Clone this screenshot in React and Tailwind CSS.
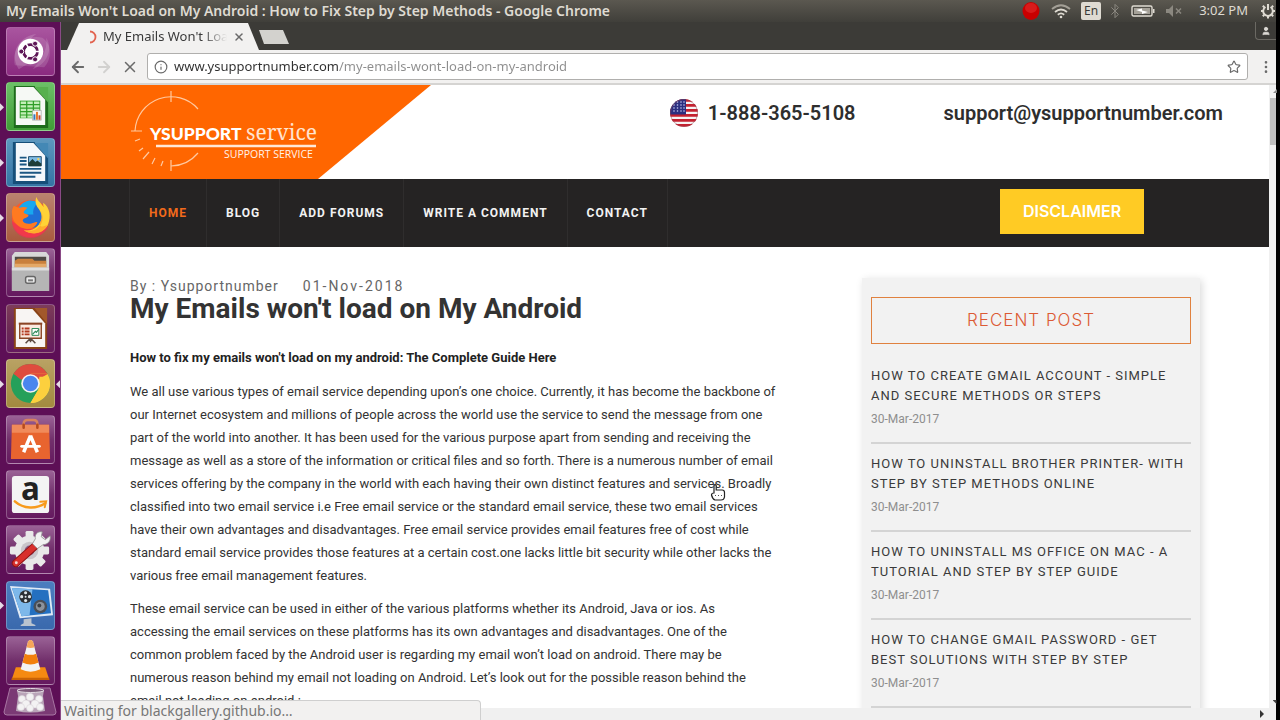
import React from "react";
import { ArrowLeft, ArrowRight, X, Star, Info, User, Bluetooth, EllipsisVertical } from "lucide-react";

const ui = "font-['Noto_Sans','Open_Sans',sans-serif]";

function Tile({ label, className, running, focused, children }) {
  return (
    <li className="relative flex w-full justify-center">
      {running && (
        <span className="absolute top-[21px] left-0 h-2 w-1 bg-[#e6dbe6] [clip-path:polygon(0_0,100%_50%,0_100%)]" />
      )}
      <button
        type="button"
        aria-label={label}
        className={`h-[49px] w-[49px] rounded-[4px] border border-white/25 ${className}`}
      >
        <svg viewBox="0 0 48 48" className="h-full w-full overflow-visible" aria-hidden="true">
          {children}
        </svg>
      </button>
      {focused && (
        <span className="absolute top-[21px] right-0 h-2 w-1 bg-[#e6dbe6] [clip-path:polygon(100%_0,0_50%,100%_100%)]" />
      )}
    </li>
  );
}

const glass = "bg-linear-to-b from-[#9a6296] via-[#72306c] to-[#65195f]";

function Launcher() {
  return (
    <nav
      aria-label="Launcher"
      className="flex w-[61px] shrink-0 flex-col gap-0.5 border-r border-[#8a4a86] bg-[#5d0f56] pt-[5px] pb-1"
    >
      <ul className="flex flex-1 flex-col justify-between">
        <Tile label="Search your computer" className="bg-linear-to-b from-[#a9559f] to-[#8b2a80]">
          <path d="M8 38C4 20 18 6 36 10c10 6 10 22 2 30" fill="#fff" opacity=".14" />
          <path d="M12 42C2 26 12 8 30 6C20 12 16 24 22 36Z" fill="#fff" opacity=".16" />
          <path d="M40 10c8 12 0 28-14 32c8-8 16-18 14-32Z" fill="#fff" opacity=".14" />
          <circle cx="24" cy="24" r="13" fill="#fff" />
          <circle cx="24" cy="24" r="7" fill="none" stroke="#5d1656" strokeWidth="3" />
          <g stroke="#fff" strokeWidth="1.6">
            <path d="M24 24L34 24M24 24L19 33M24 24L19 15" />
          </g>
          <circle cx="24" cy="24" r="5.4" fill="#fff" />
          <g fill="#5d1656" stroke="#fff" strokeWidth="1">
            <circle cx="14.6" cy="24" r="2.6" />
            <circle cx="28.7" cy="16" r="2.6" />
            <circle cx="28.7" cy="32" r="2.6" />
          </g>
        </Tile>
        <Tile label="LibreOffice Calc" running className="bg-linear-to-b from-[#6cc067] to-[#3f9d35]">
          <path d="M7 3h21l14 15v28H7z" fill="#1d6b1b" />
          <path d="M28 4h14v16z" fill="#58b04e" />
          <path d="M9 4h18l12 13v26H9z" fill="#f6f9f5" />
          <path d="M27 4v0l12 13z" fill="#c9e6c3" />
          <path d="M13 18h21v18H13z" fill="#2f9e27" />
          <g fill="#c4efb8">
            {[19, 22.6, 26.2, 29.8, 33.2].map((y) => (
              <path key={y} d={`M14 ${y}h5.5v2.4h-5.5zM20.8 ${y}h5.5v2.4h-5.5zM27.6 ${y}h5.5v2.4h-5.5z`} />
            ))}
          </g>
          <path d="M26 28h9v10h-9z" fill="#f4f4f4" stroke="#9a9a9a" strokeWidth=".6" />
          <path d="M27 32h2v5.500h-2z" fill="#3179bd" />
          <path d="M29.600 29.500h2v8h-2z" fill="#e7762b" />
          <path d="M32.200 33h2v4.500h-2z" fill="#c94a2c" />
        </Tile>
        <Tile label="LibreOffice Writer" running className="bg-linear-to-b from-[#5c97be] to-[#3474a4]">
          <path d="M6 3h22l14 15v28H6z" fill="#164f79" />
          <path d="M28 4h14v16z" fill="#4388b5" />
          <path d="M9 4h18l12 13v26H9z" fill="#f4f8fb" />
          <path d="M27 4v0l12 13z" fill="#bcd9ec" />
          <path d="M13 18h7v2h-7zM13 21.500h7v2h-7zM13 25h7v2h-7zM13 29.500h22v2H13zM13 33.500h22v2H13zM13 37.500h16v2H13z" fill="#1b5783" />
          <path d="M22 18h13v9.500H22z" fill="#7fbbe4" stroke="#23506f" strokeWidth="1" />
          <path d="M22 27.500v-3l4-4 3 3 2-1.500 4 3v2.500z" fill="#1e3d38" />
          <circle cx="32" cy="20.500" r="1.200" fill="#f4d35e" />
        </Tile>
        <Tile label="Firefox" running className="bg-linear-to-b from-[#b9836f] to-[#a95a3e]">
          <circle cx="24" cy="25" r="19" fill="#fb5a2a" />
          <path d="M5 27c0 10 8 18 19 18 9 0 16-6 18-12-7 5-22 5-28-2-4 0-7-1-9-4Z" fill="#ee2f55" opacity=".75" />
          <circle cx="25" cy="22" r="12.500" fill="#1f6fd6" />
          <path d="M12 14C17 6 26 5 31 9c-3 4-5 7-4 12H18c-3-2-5-4-6-7Z" fill="#18a8ee" />
          <path d="M7 12c2 1 4 2 6 2 3-1 5-1 8 0-2 2-4 3-4 5 1 2 4 1 5 3-1 3-5 2-6 5 1 3 5 4 9 3 2 0 4-2 6-1-2 5-8 8-14 6-8-2-12-9-12-17 0-2 1-4 2-6Z" fill="#ff7a20" />
          <path d="M30 3c-2 6 0 9 3 13 4 6 3 12-2 17-4 4-9 5-14 4 10 6 21 3 25-6 3-8 2-17-5-22 0 2 0 3 .5 4.500-2-4-6-6-7.500-10.500Z" fill="#ffd336" />
          <path d="M34 17c4 6 3 13-3 18-4 3-9 3-14 2 9 6 20 4 25-6-4 3-9 3-9-1 3-4 3-8 1-13Z" fill="#ffa62a" opacity=".85" />
        </Tile>
        <Tile label="Files" className={glass}>
          <path d="M5 7l3-4h32l3 4v36H5z" fill="#d8d8d8" />
          <path d="M8 8h32v14H8z" fill="#4f4a45" />
          <path d="M8 12l3-2h15l2 2h12v10H8z" fill="#c9803d" />
          <path d="M8 15h32v7H8z" fill="#e4a867" />
          <path d="M5 19h38v24H5z" fill="#b5b5b5" />
          <path d="M5 19h38v3H5z" fill="#dedede" />
          <rect x="19" y="28" width="10" height="7" rx="2" fill="#e9e9e9" stroke="#666" strokeWidth="1.500" />
          <path d="M21.500 31h5v2h-5z" fill="#777" />
        </Tile>
        <Tile label="LibreOffice Impress" className="bg-linear-to-b from-[#7d3c5a] via-[#6d2a55] to-[#65195f]">
          <path d="M7 3h22l12 13v29H7z" fill="#8a4316" />
          <path d="M28 3h13v16z" fill="#a2582b" />
          <path d="M9 4h17l13 15v24H9z" fill="#f8f5f3" />
          <path d="M13 19h22v15H13z" fill="#fbe9df" stroke="#8a4424" strokeWidth="1.400" />
          <path d="M12 18h24v2H12z" fill="#8a4424" />
          <path d="M15 23h2v2h-2zM15 26h2v2h-2zM15 29h2v2h-2zM18 23h5v2h-5zM18 26h5v2h-5zM18 29h5v2h-5z" fill="#b33a20" />
          <path d="M25.500 24h7v7h-7z" fill="#fff" stroke="#2f8a58" strokeWidth="1" />
          <path d="M26 30l3-3 1 1 2.500-3" fill="none" stroke="#2f8a58" strokeWidth="1.200" />
          <path d="M24 34l-5 5M24 34l5 5M24 34v4" stroke="#5c4a42" strokeWidth="1.600" />
        </Tile>
        <Tile label="Google Chrome" running focused className="bg-linear-to-b from-[#b9a263] to-[#a28a3f]">
          <circle cx="24" cy="24" r="20" fill="#25a05a" />
          <path d="M24 24L6.700 14A20 20 0 0 1 41.300 14Z" fill="#df4c3e" />
          <path d="M24 14H41.300A20 20 0 0 1 24 44L32.700 29Z" fill="#fcd03e" />
          <path d="M24 14H42L32 20L14 20L6.700 14Z" fill="#df4c3e" />
          <path d="M33 17h9.700A20 20 0 0 1 24 44l8-14Z" fill="#fcd03e" />
          <circle cx="24" cy="24" r="9.500" fill="#f3f3f3" />
          <circle cx="24" cy="24" r="7.800" fill="#4a86ee" />
        </Tile>
        <Tile label="Ubuntu Software" className={glass}>
          <path d="M17 12V8c0-3 2-4 4-4h6c2 0 4 1 4 4v4" fill="none" stroke="#d9825e" strokeWidth="2.600" />
          <path d="M5 9h38l1 35H4z" fill="#e8642f" />
          <path d="M5 9h38v8H5z" fill="#f08a5a" />
          <path d="M17 12V9M31 12V9" stroke="#b64a1e" strokeWidth="2.600" strokeLinecap="round" />
          <path d="M24 20l-7 17M24 20l7 17" stroke="#fff" strokeWidth="3.600" />
          <path d="M15 31h18" stroke="#fff" strokeWidth="3" strokeLinecap="round" />
        </Tile>
        <Tile label="Amazon" className={glass}>
          <rect x="5" y="5" width="38" height="38" rx="3" fill="#f4f4f4" />
          <text x="24" y="30" textAnchor="middle" fontSize="32" fontWeight="700" fill="#222" className="font-['Open_Sans',sans-serif]">a</text>
          <path d="M8 31c9 8 22 8 31 2" fill="none" stroke="#f79a1c" strokeWidth="2.600" strokeLinecap="round" />
          <path d="M34 31.500l6-.5-1.500 6" fill="none" stroke="#f79a1c" strokeWidth="2" strokeLinecap="round" />
        </Tile>
        <Tile label="System Settings" className={glass}>
          <g fill="#e9e9e9">
            <circle cx="23" cy="25" r="15" />
            {[0, 45, 90, 135].map((a) => (
              <rect key={a} x="19" y="5" width="8" height="40" rx="1.500" transform={`rotate(${a} 23 25)`} />
            ))}
          </g>
          <circle cx="23" cy="25" r="9" fill="#c9c5c9" />
          <circle cx="23" cy="25" r="5" fill="#8b5f88" />
          <path d="M9 38L28 21" stroke="#8f1313" strokeWidth="8" strokeLinecap="round" />
          <path d="M9 38L28 21" stroke="#d8302c" strokeWidth="6" strokeLinecap="round" />
          <path d="M26 18l5 5 6-4c5 0 8-4 7-9l-5 4-4-3 1-5c-5-1-8 3-7 7Z" fill="#f2f2f2" stroke="#8f8f8f" strokeWidth=".8" />
          <circle cx="9.500" cy="37.500" r="1.500" fill="#f6d6d6" />
        </Tile>
        <Tile label="Screen recorder" running className="bg-linear-to-b from-[#4c7ebf] to-[#3a69ad]">
          <path d="M3 4l41 3 3 27-34 3z" fill="#dfeaf6" />
          <path d="M5 6l37 2.500 3 23.500-30 3z" fill="#2470c0" />
          <path d="M5 6l21 1.500-3 26.500-8 1z" fill="#7db8ea" />
          <circle cx="19" cy="15" r="6.500" fill="#2b2f33" />
          <g fill="#dfe6ea">
            <circle cx="19" cy="11" r="1.600" />
            <circle cx="19" cy="19" r="1.600" />
            <circle cx="15" cy="15" r="1.600" />
            <circle cx="23" cy="15" r="1.600" />
            <circle cx="19" cy="15" r="1" />
          </g>
          <circle cx="34" cy="25" r="7" fill="#4a4f57" />
          <circle cx="34" cy="25" r="4.500" fill="#8c939c" />
          <circle cx="33" cy="24" r="2" fill="#3a3f46" />
          <path d="M17 38l8-1v5l4 2v1H14v-1l3-2z" fill="#b9c3cf" />
        </Tile>
        <Tile label="VLC media player" className={glass}>
          <path d="M9 31h30l4 12H5z" fill="#f58a12" />
          <path d="M5 41.500h38l.5 2.500h-39z" fill="#c96306" />
          <path d="M21.500 4.500q2.500-3 5 0L34 33q-10 5-20 0z" fill="#f3f3f3" />
          <path d="M21.500 4.500q2.500-3 5 0l1.700 6q-4.200 1.500-8.400 0z" fill="#f6a55a" />
          <path d="M18.200 17q5.800 2.500 11.600 0l2.400 9q-8.200 4-16.400 0z" fill="#f2800d" />
        </Tile>
      </ul>
      <button type="button" aria-label="Trash" className="flex h-[29px] justify-center">
        <svg viewBox="0 0 56 29" className="h-[29px] w-[56px]" aria-hidden="true">
          <path d="M8 1h40l6 24q0 3-3 3H5q-3 0-3-3z" fill="#7b3a75" stroke="#a876a3" strokeWidth="1" />
          <path d="M15 3h27l-1 6 2 15q-15 3-29 0l2-15z" fill="#b9a4b8" />
          <ellipse cx="28.500" cy="3.500" rx="13.500" ry="2" fill="#7d5b7a" stroke="#e3dbe2" strokeWidth="1" />
          <g fill="#f3f2f3" stroke="#d8d4d8" strokeWidth=".6">
            <circle cx="20" cy="12" r="3.500" />
            <circle cx="28" cy="10" r="3.800" />
            <circle cx="37" cy="12" r="3.500" />
            <circle cx="24" cy="17" r="4" />
            <circle cx="33" cy="17" r="4" />
            <circle cx="19" cy="20" r="3.500" />
            <circle cx="38" cy="20" r="3.500" />
            <circle cx="28" cy="21" r="3.500" />
          </g>
        </svg>
      </button>
    </nav>
  );
}

function TopPanel() {
  return (
    <header className={`flex h-[22px] shrink-0 items-center justify-between overflow-hidden bg-linear-to-b from-[#5b5850] to-[#403f3a] pl-1.5 text-[#dfdbd2] ${ui}`}>
      <span className="text-sm font-semibold whitespace-nowrap">
        My Emails Won't Load on My Android : How to Fix Step by Step Methods - Google Chrome
      </span>
      <div className="flex shrink-0 items-center">
        <svg viewBox="0 0 18 20" className="h-5 w-[18px]" aria-hidden="true">
          <ellipse cx="9" cy="10" rx="8.500" ry="9" fill="#c90000" />
          <ellipse cx="9" cy="7" rx="6" ry="5" fill="#e32d2d" opacity=".6" />
        </svg>
        <svg viewBox="0 0 20 16" className="ml-[11px] h-4 w-5" fill="none" strokeWidth="1.800" aria-hidden="true">
          <path d="M1 6q9-7.500 18 0" stroke="#a39f96" />
          <path d="M4 9q6-5 12 0" stroke="#dfdbd2" />
          <path d="M6.800 11.700q3.200-2.700 6.400 0" stroke="#dfdbd2" />
          <circle cx="10" cy="14" r="1.300" fill="#dfdbd2" />
        </svg>
        <span className="ml-2.5 h-[18px] rounded-[2px] bg-[#dfdbd2] px-[3px] text-xs leading-[18px] text-[#3c3b37]">En</span>
        <Bluetooth className="ml-1.5 size-4 text-[#8b8880]" strokeWidth={1.5} />
        <svg viewBox="0 0 24 14" className="ml-2 h-3.5 w-6" aria-hidden="true">
          <rect x="1" y="2" width="20" height="10" rx="1.500" fill="none" stroke="#dfdbd2" strokeWidth="1.400" />
          <path d="M22 5h1.500v4H22z" fill="#dfdbd2" />
          <path d="M3 4h16v6H3z" fill="#a5a198" />
          <path d="M5 6l6-1.500v2l6 1.500-6 2v-2z" fill="#fff" />
        </svg>
        <svg viewBox="0 0 18 14" className="ml-2.5 h-3.5 w-[18px]" aria-hidden="true">
          <path d="M1 5h3l4-4v12L4 9H1z" fill="#8b8880" />
          <path d="M11 4.500l5 5M16 4.500l-5 5" stroke="#8b8880" strokeWidth="1.500" />
        </svg>
        <span className="ml-4 text-[13px] whitespace-nowrap">3:02 PM</span>
        <svg viewBox="0 0 16 16" className="ml-3 h-4 w-4" fill="none" stroke="#dfdbd2" aria-hidden="true">
          <path d="M10.500 4a4.800 4.800 0 1 1-5 0" strokeWidth="2" />
          <path d="M8 1v6" strokeWidth="2" />
          <path d="M1 8h2M13 8h2M2.800 13.200l1.500-1.500M13.200 13.200l-1.500-1.500M8 13v2.500M2.800 2.800l1.500 1.500M13.200 2.800l-1.500 1.500" strokeWidth="2" />
        </svg>
      </div>
    </header>
  );
}

function TabStrip() {
  return (
    <div className={`flex h-7 items-start bg-[#3c3b37] pl-1.5 ${ui}`}>
      <div className="mt-px flex h-[27px] w-[192px] items-center bg-[#f2f1f0] pl-5 [clip-path:polygon(12px_0,181px_0,100%_100%,0_100%)]">
        <svg viewBox="0 0 12 14" className="h-3.5 w-3" fill="none" aria-hidden="true">
          <path d="M3 1.500a5.500 5.500 0 0 1 0 11" stroke="#e2634f" strokeWidth="1.800" />
        </svg>
        <span className="ml-1 w-[124px] overflow-hidden text-[13px] whitespace-nowrap text-[#3a3a3a] [mask-image:linear-gradient(to_right,black_80%,transparent)]">
          My Emails Won't Load
        </span>
        <button type="button" aria-label="Close tab" className="ml-1.5 text-[#6a6a6a]">
          <X className="size-3" strokeWidth={3} />
        </button>
      </div>
      <button type="button" aria-label="New tab" className="mt-2 h-3.5 w-[30px] bg-[#d3d2ce] [clip-path:polygon(0_0,24px_0,100%_100%,5px_100%)]" />
      <button type="button" aria-label="Profile" className="ml-auto flex h-[18px] w-[21px] items-center justify-center rounded-bl border-b border-l border-[#6b6963] text-[#dcdad5]">
        <User className="size-2.5" fill="currentColor" strokeWidth={2} />
      </button>
    </div>
  );
}

function Toolbar() {
  return (
    <div className="flex h-[35px] items-center border-b-2 border-[#d5d4d2] bg-[#f2f1f0] pr-0.5 pl-2 text-[#6a6a6a]">
      <button type="button" aria-label="Back"><ArrowLeft className="size-[18px]" strokeWidth={2.4} /></button>
      <button type="button" aria-label="Forward" className="ml-2 text-[#d2d1cf]"><ArrowRight className="size-[18px]" strokeWidth={2.4} /></button>
      <button type="button" aria-label="Stop loading" className="ml-2"><X className="size-[18px]" strokeWidth={2} /></button>
      <div className="ml-2 flex h-[27px] flex-1 items-center rounded-[3px] border border-[#b0afad] bg-white px-1.5">
        <Info className="size-3.5 shrink-0" strokeWidth={2} />
        <input
          aria-label="Address"
          type="text"
          readOnly
          value="www.ysupportnumber.com/my-emails-wont-load-on-my-android"
          className={`ml-1.5 min-w-0 flex-1 bg-[linear-gradient(to_right,#2f2f2f_165px,#8d8d8d_165px)] bg-clip-text text-[13px] text-transparent outline-none ${ui}`}
        />
        <button type="button" aria-label="Bookmark"><Star className="size-3.5" strokeWidth={2} /></button>
      </div>
      <button type="button" aria-label="Menu" className="ml-2.5"><EllipsisVertical className="size-4" fill="currentColor" strokeWidth={2} /></button>
    </div>
  );
}

function Logo() {
  return (
    <svg viewBox="0 0 190 84" className="h-[84px] w-[190px]" fill="none" role="img" aria-label="Ysupport service">
      <g stroke="#ffc9a0" strokeWidth="1.200">
        <path d="M5 42A36 36 0 0 1 68 20" />
        <path d="M41 77A36 36 0 0 0 68 64" />
        <path d="M41 2v11M41 71v11M1 42h11" />
        <path d="M5 52l5-2M9 62l4-3M13 70l6-7M22 75l3-6M31 77l2-5" />
      </g>
      <text x="20" y="51" fontSize="17.500" fontWeight="900" fill="#fff" className="font-['Lato',sans-serif]">YSUPPORT</text>
      <text x="116" y="51" fontSize="21" fill="#ffe3cf" className="font-['Noto_Serif','DejaVu_Serif_Condensed','DejaVu_Serif',serif]">service</text>
      <path d="M26 57h160" stroke="#ffe9d8" strokeWidth="2.400" />
      <text x="94" y="69" fontSize="10.500" fill="#fff3ea" className="font-['Open_Sans',sans-serif]">SUPPORT SERVICE</text>
    </svg>
  );
}

function Flag() {
  return (
    <svg viewBox="0 0 28 28" className="h-7 w-7" role="img" aria-label="United States">
      <defs>
        <clipPath id="flag-disc"><circle cx="14" cy="14" r="14" /></clipPath>
      </defs>
      <g clipPath="url(#flag-disc)">
        <path d="M0 0h28v28H0z" fill="#f6f3f3" />
        {[0, 5, 10, 15, 20, 25].map((y) => (
          <path key={y} d={`M0 ${y}h28v2.700H0z`} fill="#c5212f" />
        ))}
        <path d="M0 0h16v15.500H0z" fill="#2b2f80" />
        <g fill="#c6c9ee">
          {[3, 6, 9, 12].map((y) =>
            [4, 7.5, 11, 14].map((x) => <circle key={`${x}-${y}`} cx={x} cy={y} r=".8" />)
          )}
        </g>
      </g>
      <circle cx="14" cy="14" r="13.500" fill="none" stroke="#8b4a55" strokeWidth=".8" opacity=".6" />
    </svg>
  );
}

const menu = ["HOME", "BLOG", "ADD FORUMS", "WRITE A COMMENT", "CONTACT"];

const posts = [
  "HOW TO CREATE GMAIL ACCOUNT - SIMPLE AND SECURE METHODS OR STEPS",
  "HOW TO UNINSTALL BROTHER PRINTER- WITH STEP BY STEP METHODS ONLINE",
  "HOW TO UNINSTALL MS OFFICE ON MAC - A TUTORIAL AND STEP BY STEP GUIDE",
  "HOW TO CHANGE GMAIL PASSWORD - GET BEST SOLUTIONS WITH STEP BY STEP",
];

function Page() {
  return (
    <div className="min-w-0 flex-1 overflow-hidden bg-white font-['Roboto',sans-serif]">
      <header className="flex h-[94px] items-start justify-between">
        <div className="h-full w-[370px] bg-[#ff6600] pt-1 pl-[69px] [clip-path:polygon(0_0,100%_0,257px_100%,0_100%)]">
          <Logo />
        </div>
        <div className="flex items-center gap-[88px] pt-3 pr-[46px] text-xl leading-8 font-semibold text-[#2e2e2e]">
          <a href="#call" className="flex items-center gap-2.5"><Flag />1-888-365-5108</a>
          <a href="#mail">support@ysupportnumber.com</a>
        </div>
      </header>
      <nav aria-label="Main" className="flex h-[68px] items-center justify-between bg-[#252323] pr-[125px] pl-[68px]">
        <ul className="flex h-full border-l border-[#2f2d2d]">
          {menu.map((item, i) => (
            <li key={item} className="border-r border-[#2f2d2d]">
              <a
                href="#menu"
                className={`flex h-full items-center px-[19px] text-xs font-bold tracking-[1px] ${i === 0 ? "text-[#f26a1b]" : "text-[#f2f2f2]"}`}
              >
                {item}
              </a>
            </li>
          ))}
        </ul>
        <button type="button" className="mb-1 h-[45px] w-36 bg-[#ffcb24] font-['Inter',sans-serif] text-base font-semibold text-white">
          DISCLAIMER
        </button>
      </nav>
      <main className="flex items-start justify-between pt-[31px] pr-[69px] pl-[69px]">
        <article className="w-[654px] text-[13px] leading-[23px] text-[#333]">
          <p className="flex gap-6 text-sm leading-4 text-[#666]">
            <span className="tracking-[1px]">By : Ysupportnumber</span>
            <time className="tracking-[2px]">01-Nov-2018</time>
          </p>
          <h1 className="text-[28px] leading-[30px] font-bold text-[#333]">My Emails won't load on My Android</h1>
          <h2 className="mt-[22px] font-bold text-[#222]">How to fix my emails won't load on my android: The Complete Guide Here</h2>
          <p className="mt-[11px]">
            We all use various types of email service depending upon’s one choice. Currently, it has become the backbone of our Internet ecosystem and millions of people across the world use the service to send the message from one part of the world into another. It has been used for the various purpose apart from sending and receiving the message as well as a store of the information or critical files and so forth. There is a numerous number of email services offering by the company in the world with each having their own distinct features and services. Broadly classified into two email service i.e Free email service or the standard email service, these two email services have their own advantages and disadvantages. Free email service provides email features free of cost while standard email service provides those features at a certain cost.one lacks little bit security while other lacks the various free email management features.
          </p>
          <p className="mt-2.5 pr-4">
            These email service can be used in either of the various platforms whether its Android, Java or ios. As accessing the email services on these platforms has its own advantages and disadvantages. One of the common problem faced by the Android user is regarding my email won’t load on android. There may be numerous reason behind my email not loading on Android. Let’s look out for the possible reason behind the email not loading on android :
          </p>
        </article>
        <aside className="h-[480px] w-[338px] bg-[#f2f2f2] px-[9px] pt-[19px] shadow-[2px_2px_8px_rgba(0,0,0,0.15)]">
          <h2 className="border border-[#e0813f] text-center font-['Inter',sans-serif] text-[17px] leading-[45px] font-light tracking-[1px] text-[#dc5a34]">
            RECENT POST
          </h2>
          <ul className="mt-3">
            {posts.map((title) => (
              <li key={title} className="border-b-2 border-[#d4d4d4] py-2.5">
                <a href="#post" className="block text-[13px] leading-5 tracking-[1px] text-[#3a3a3a]">{title}</a>
                <time className="block text-xs leading-[26px] text-[#8e8e8e]">30-Mar-2017</time>
              </li>
            ))}
          </ul>
        </aside>
      </main>
    </div>
  );
}

export default function App() {
  return (
    <div className="h-screen overflow-hidden bg-black pr-1">
      <div className="relative flex h-full flex-col">
        <TopPanel />
        <div className="flex min-h-0 flex-1">
          <Launcher />
          <div className="relative flex min-w-0 flex-1 flex-col">
            <TabStrip />
            <Toolbar />
            <div className="flex min-h-0 flex-1">
              <Page />
              <div className="flex w-[7px] flex-col items-center justify-between bg-[#f0f0f0] pb-1">
                <div className="flex w-full flex-col pt-1">
                  <span className="ml-1 h-1 w-1 bg-[#8a8a8a] [clip-path:polygon(100%_0,100%_100%,0_100%)]" />
                  <span className="mt-[5px] ml-px h-[47px] bg-[#bfbfbf]" />
                </div>
                <span className="ml-1 h-1 w-1 bg-[#444] [clip-path:polygon(0_0,100%_0,100%_100%)]" />
              </div>
            </div>
            <div className="flex h-3 items-center justify-end bg-[#f0f0f0] pr-3">
              <span className="h-2 w-1 bg-[#333] [clip-path:polygon(0_0,100%_50%,0_100%)]" />
            </div>
            <div className={`absolute bottom-0 left-0 h-5 w-[420px] rounded-tr border-t border-r border-[#cfcfcf] bg-[#f2f1f0] pl-[3px] text-sm leading-[20px] text-[#777] ${ui}`}>
              Waiting for blackgallery.github.io…
            </div>
          </div>
        </div>
        <svg viewBox="0 0 16 18" className="absolute top-[483px] left-[710px] h-[18px] w-4" aria-hidden="true">
          <path d="M4 10V2.500q1-1.800 2.200 0V7h6q2.300 0 2.300 2.500V14q-.5 3-3.500 3H5Q2.500 16 1.500 12q0-2 2.500-2Z" fill="#fff" stroke="#222" strokeWidth="1.200" />
          <path d="M5.500 12v.8M8.500 12v.8M11.500 12v.8" stroke="#222" strokeWidth="1" />
        </svg>
      </div>
    </div>
  );
}
